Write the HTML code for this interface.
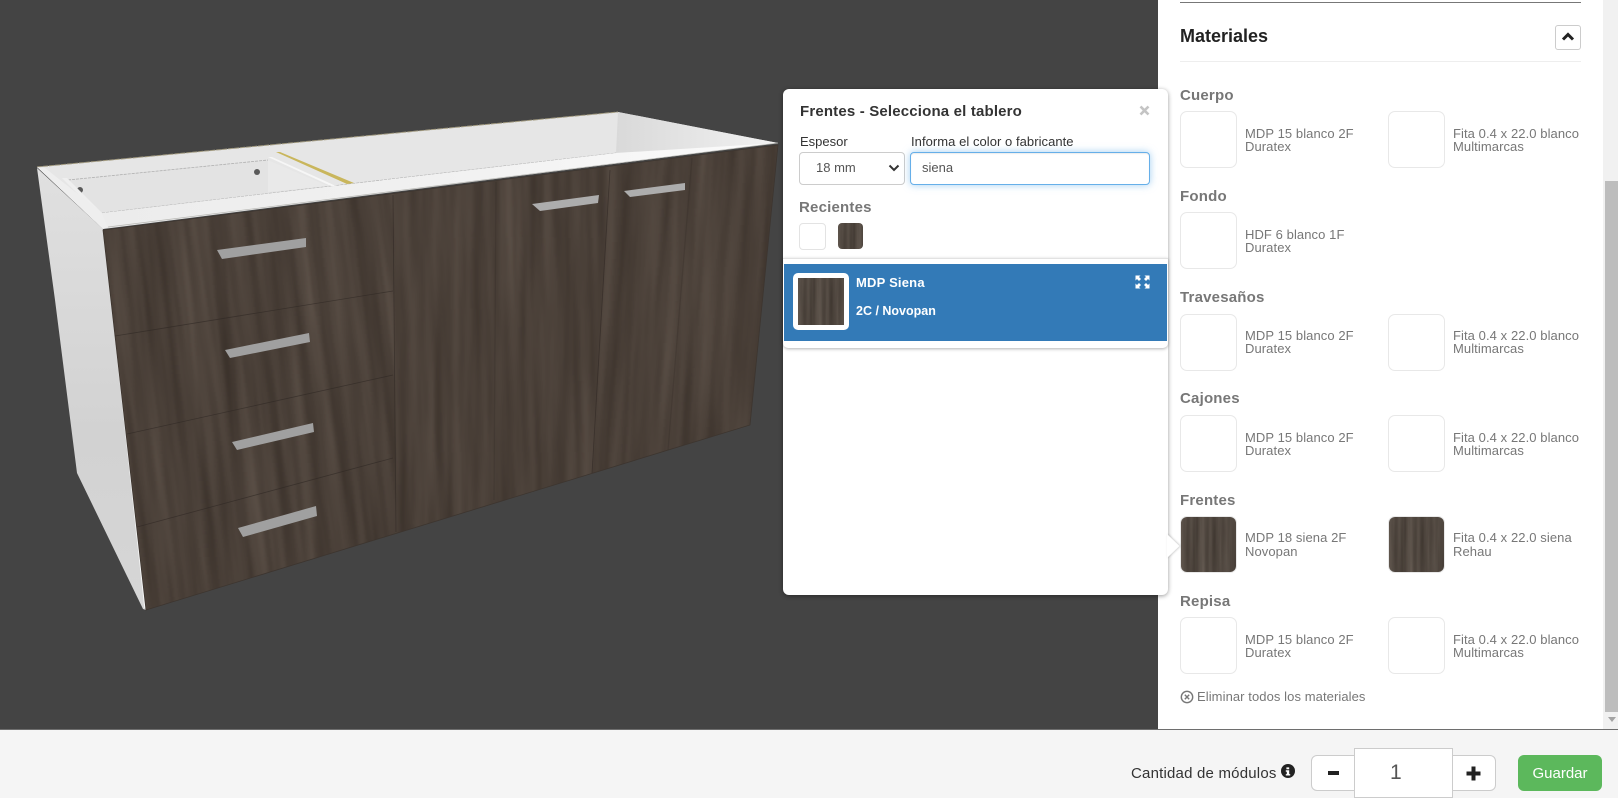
<!DOCTYPE html>
<html lang="es">
<head>
<meta charset="utf-8">
<title>Materiales</title>
<style>
html,body{margin:0;padding:0;width:1618px;height:798px;overflow:hidden;background:#444;font-family:"Liberation Sans",Arial,sans-serif}
.a{position:absolute}
.t{position:absolute;white-space:nowrap}
.h{position:absolute;white-space:nowrap;font-size:15px;font-weight:700;color:#777;line-height:18px;letter-spacing:.2px}
.th{position:absolute;width:55px;height:55px;border:1px solid #e8e8e8;border-radius:7px;background:#fff;overflow:hidden}
.d{position:absolute;white-space:nowrap;font-size:13px;line-height:13px;color:#777;letter-spacing:.08px}
svg{display:block}
</style>
</head>
<body>
<svg class="a" width="0" height="0" style="left:0;top:0">
<defs>
<filter id="wood" x="0" y="0" width="100%" height="100%" color-interpolation-filters="sRGB">
<feTurbulence type="fractalNoise" baseFrequency="0.075 0.0035" numOctaves="4" seed="7"/>
<feColorMatrix type="matrix" values="0.16 0 0 0 0.21  0.15 0 0 0 0.175  0.14 0 0 0 0.15  0 0 0 0 1"/>
<feGaussianBlur stdDeviation="1 1.2"/>
</filter>
<filter id="wood2" x="0" y="0" width="100%" height="100%" color-interpolation-filters="sRGB">
<feTurbulence type="fractalNoise" baseFrequency="0.16 0.008" numOctaves="3" seed="4"/>
<feColorMatrix type="matrix" values="0.2 0 0 0 0.22  0.19 0 0 0 0.19  0.18 0 0 0 0.165  0 0 0 0 1"/>
</filter>
<linearGradient id="side" x1="0" x2="0" y1="0" y2="1"><stop offset="0" stop-color="#e0e0e0"/><stop offset="0.6" stop-color="#d2d2d2"/><stop offset="1" stop-color="#d6d6d6"/></linearGradient>
<linearGradient id="rin" x1="0" x2="1" y1="0" y2="0"><stop offset="0" stop-color="#d9d9d9"/><stop offset="1" stop-color="#f2f2f2"/></linearGradient>
<linearGradient id="rail" x1="0" x2="1" y1="0" y2="0"><stop offset="0" stop-color="#ececec"/><stop offset="0.5" stop-color="#f1f1f1"/><stop offset="1" stop-color="#fbfbfb"/></linearGradient>
<clipPath id="front"><polygon points="103,230 778,145 750,425 146,610"/></clipPath>
</defs>
</svg>

<!-- 3D scene -->
<svg class="a" style="left:0;top:0" width="1158" height="730" viewBox="0 0 1158 730">
<rect width="1158" height="730" fill="#444"/>
<!-- top surface -->
<polygon points="37,167 618,112 778,143 103,229" fill="#e6e6e6"/>
<!-- right inner wall -->
<polygon points="618,112 778,143 616,153" fill="url(#rin)"/>
<line x1="37" y1="167" x2="618" y2="112" stroke="#a59d82" stroke-width="1" stroke-dasharray="5 1"/>
<!-- drawer box -->
<polygon points="68,180 268,160 328,186 102,213" fill="#e3e3e3"/>
<polygon points="268,160 328,186 268,192" fill="#e9e9e9"/>
<polyline points="68,180 268,160" fill="none" stroke="#b0b0b0" stroke-width="0.8" stroke-dasharray="3 1"/>
<polyline points="102,213 400,178 616,153" fill="none" stroke="#b0b0b0" stroke-width="0.8" stroke-dasharray="3 1"/>
<circle cx="80" cy="190" r="3" fill="#5a5a5a"/>
<circle cx="257" cy="172" r="3" fill="#5a5a5a"/>
<polygon points="268,157 272,157 336,186 331,186" fill="#f6f6f6"/>
<polygon points="276,152 280,152 354,183 347,184" fill="#c9b65c"/>
<polygon points="62,178 67,178 102,213 97,213" fill="#efefef"/>
<!-- front rail -->
<polygon points="102,213 616,153 778,143 108,227" fill="url(#rail)"/>
<polygon points="37,167 45,168 102,213 108,227 103,229" fill="#eeeeee"/>
<line x1="108" y1="227" x2="778" y2="143" stroke="#b8b8b4" stroke-width="0.7"/>
<!-- left side -->
<polygon points="37,168 103,229 146,610 143,609 77,473 55,300" fill="url(#side)"/>
<line x1="104" y1="232" x2="145" y2="608" stroke="#f6f6f6" stroke-width="1.4"/>
<!-- front face -->
<g clip-path="url(#front)">
<rect x="0" y="0" width="800" height="640" fill="#4e443d"/>
<g transform="translate(75,140) skewX(6.4)"><rect x="0" y="0" width="335" height="490" filter="url(#wood)"/></g>
<g transform="translate(-7,130) skewX(0.4)"><rect x="400" y="0" width="240" height="500" filter="url(#wood)"/></g>
<g transform="translate(-87,120) skewX(-3.4)"><rect x="700" y="0" width="185" height="400" filter="url(#wood)"/></g>
</g>
<polygon points="103,230 778,145 750,425 146,610" fill="none" stroke="#3d352f" stroke-width="0.8"/>
<!-- seams -->
<g stroke="#2e2723" stroke-width="0.8" fill="none" opacity=".6">
<line x1="115" y1="336" x2="393" y2="291"/>
<line x1="127" y1="434" x2="393" y2="375"/>
<line x1="137" y1="527" x2="393" y2="458"/>
<line x1="393" y1="195" x2="396" y2="532"/>
<line x1="610" y1="170" x2="592" y2="473"/>
</g>
<g stroke="#2e2723" stroke-width="1.2" fill="none" opacity=".25">
<line x1="496" y1="182" x2="494" y2="500"/>
<line x1="692" y1="158" x2="668" y2="450"/>
</g>
<!-- handles -->
<g fill="#a0a0a0">
<polygon points="217,250 306,238 306,247 222,259"/>
<polygon points="225,350 309,333 310,342 230,358"/>
<polygon points="232,442 313,423 314,432 237,450"/>
<polygon points="238,528 316,506 317,516 243,537"/>
<polygon points="532,204 599,195 598,203 540,211" fill="#adadad"/>
<polygon points="624,191 685,183 685,190 630,197" fill="#adadad"/>
</g>
</svg>

<!-- right panel -->
<div class="a" style="left:1158px;top:0;width:445px;height:729px;background:#fff"></div>
<div class="a" style="left:1603px;top:0;width:15px;height:729px;background:#f1f1f1"></div>
<div class="a" style="left:1605px;top:181px;width:13px;height:531px;background:#bdbdbd"></div>
<svg class="a" style="left:1608px;top:717px" width="9" height="6"><polygon points="0,0 8,0 4,5" fill="#a3a3a3"/></svg>

<div class="a" style="left:1180px;top:2px;width:401px;height:1px;background:#777"></div>
<div class="t" style="left:1180px;top:25px;font-size:18px;line-height:22px;font-weight:700;color:#222">Materiales</div>
<div class="a" style="left:1555px;top:25px;width:24px;height:23px;border:1px solid #ccc;border-radius:3px;background:#fff"></div>
<svg class="a" style="left:1561px;top:31px" width="14" height="11"><path d="M2 8.5 L7 3.5 L12 8.5" fill="none" stroke="#222" stroke-width="3"/></svg>
<div class="a" style="left:1180px;top:61px;width:401px;height:1px;background:#eee"></div>

<div class="h" style="left:1180px;top:87px">Cuerpo</div>
<div class="th" style="left:1180px;top:111px"></div>
<div class="d" style="left:1245px;top:127px">MDP 15 blanco 2F<br>Duratex</div>
<div class="th" style="left:1388px;top:111px"></div>
<div class="d" style="left:1453px;top:127px">Fita 0.4 x 22.0 blanco<br>Multimarcas</div>

<div class="h" style="left:1180px;top:188px">Fondo</div>
<div class="th" style="left:1180px;top:212px"></div>
<div class="d" style="left:1245px;top:228px">HDF 6 blanco 1F<br>Duratex</div>

<div class="h" style="left:1180px;top:289px">Travesaños</div>
<div class="th" style="left:1180px;top:314px"></div>
<div class="d" style="left:1245px;top:329px">MDP 15 blanco 2F<br>Duratex</div>
<div class="th" style="left:1388px;top:314px"></div>
<div class="d" style="left:1453px;top:329px">Fita 0.4 x 22.0 blanco<br>Multimarcas</div>

<div class="h" style="left:1180px;top:390px">Cajones</div>
<div class="th" style="left:1180px;top:415px"></div>
<div class="d" style="left:1245px;top:431px">MDP 15 blanco 2F<br>Duratex</div>
<div class="th" style="left:1388px;top:415px"></div>
<div class="d" style="left:1453px;top:431px">Fita 0.4 x 22.0 blanco<br>Multimarcas</div>

<div class="h" style="left:1180px;top:492px">Frentes</div>
<div class="th" style="left:1180px;top:516px"><svg width="55" height="55"><rect width="55" height="55" filter="url(#wood2)"/></svg></div>
<div class="d" style="left:1245px;top:531px;line-height:14px">MDP 18 siena 2F<br>Novopan</div>
<div class="th" style="left:1388px;top:516px"><svg width="55" height="55"><rect x="0" width="55" height="55" filter="url(#wood2)"/></svg></div>
<div class="d" style="left:1453px;top:531px;line-height:14px">Fita 0.4 x 22.0 siena<br>Rehau</div>

<div class="h" style="left:1180px;top:593px">Repisa</div>
<div class="th" style="left:1180px;top:617px"></div>
<div class="d" style="left:1245px;top:633px">MDP 15 blanco 2F<br>Duratex</div>
<div class="th" style="left:1388px;top:617px"></div>
<div class="d" style="left:1453px;top:633px">Fita 0.4 x 22.0 blanco<br>Multimarcas</div>

<svg class="a" style="left:1180px;top:690px" width="14" height="14"><circle cx="7" cy="7" r="5.7" fill="none" stroke="#777" stroke-width="1.4"/><path d="M4.8 4.8 L9.2 9.2 M9.2 4.8 L4.8 9.2" stroke="#777" stroke-width="1.4"/></svg>
<div class="d" style="left:1197px;top:690px;line-height:14px">Eliminar todos los materiales</div>

<!-- popover -->
<div class="a" style="left:783px;top:89px;width:385px;height:506px;background:#fff;border-radius:6px;box-shadow:0 1px 5px rgba(0,0,0,.4)"></div>
<svg class="a" style="left:1167px;top:532px;filter:drop-shadow(1px 0 1px rgba(0,0,0,.22))" width="16" height="28"><polygon points="0,2 12.5,14 0,26" fill="#fff"/></svg>
<div class="t" style="left:800px;top:102px;font-size:15px;line-height:20px;font-weight:700;color:#333;letter-spacing:.17px">Frentes - Selecciona el tablero</div>
<svg class="a" style="left:1139px;top:105px" width="11" height="11"><path d="M1.5 1.5 L9.5 9.5 M9.5 1.5 L1.5 9.5" stroke="#c4c4c4" stroke-width="2.6"/></svg>
<div class="t" style="left:800px;top:134px;font-size:13px;line-height:16px;color:#333">Espesor</div>
<div class="t" style="left:911px;top:134px;font-size:13px;line-height:16px;color:#333;letter-spacing:.05px">Informa el color o fabricante</div>
<div class="a" style="left:799px;top:152px;width:104px;height:31px;border:1px solid #ccc;border-radius:4px;background:#fff"></div>
<div class="t" style="left:816px;top:160px;font-size:13px;line-height:16px;color:#555">18 mm</div>
<svg class="a" style="left:888px;top:164px" width="12" height="9"><path d="M1.5 1.5 L6 6 L10.5 1.5" fill="none" stroke="#333" stroke-width="2"/></svg>
<div class="a" style="left:910px;top:152px;width:238px;height:31px;border:1px solid #66afe9;border-radius:4px;background:#fff;box-shadow:inset 0 1px 1px rgba(0,0,0,.075),0 0 8px rgba(102,175,233,.6)"></div>
<div class="t" style="left:922px;top:160px;font-size:13px;line-height:16px;color:#555">siena</div>
<div class="h" style="left:799px;top:199px">Recientes</div>
<div class="a" style="left:799px;top:223px;width:25px;height:25px;border:1px solid #e3e3e3;border-radius:4px;background:#fff"></div>
<div class="a" style="left:838px;top:223px;width:25px;height:26px;border-radius:4px;overflow:hidden"><svg width="25" height="26"><rect width="25" height="26" filter="url(#wood2)"/></svg></div>

<div class="a" style="left:783px;top:258px;width:385px;height:89px;background:#fff;border-top:1px solid #e2e2e2;border-radius:0 0 5px 5px;box-shadow:0 1px 3px rgba(0,0,0,.3)"></div>
<div class="a" style="left:784px;top:264px;width:383px;height:77px;background:#337ab7"></div>
<div class="a" style="left:793px;top:273px;width:46px;height:47px;padding:5px;background:#fff;border-radius:5px"><svg width="46" height="47"><rect width="46" height="47" filter="url(#wood2)"/></svg></div>
<div class="t" style="left:856px;top:275px;font-size:13px;line-height:16px;font-weight:700;color:#fff;letter-spacing:.2px">MDP Siena</div>
<div class="t" style="left:856px;top:303px;font-size:12.5px;line-height:16px;font-weight:700;color:#fff">2C / Novopan</div>
<svg class="a" style="left:1135px;top:275px" width="15" height="14"><path d="M0.5 0.5 H5.5 L4 2 L6 4 L4 6 L2 4 L0.5 5.5 Z M14.5 0.5 H9.5 L11 2 L9 4 L11 6 L13 4 L14.5 5.5 Z M0.5 13.5 H5.5 L4 12 L6 10 L4 8 L2 10 L0.5 8.5 Z M14.5 13.5 H9.5 L11 12 L9 10 L11 8 L13 10 L14.5 8.5 Z" fill="#fff"/></svg>

<!-- footer -->
<div class="a" style="left:0;top:729px;width:1618px;height:69px;background:#f5f5f5;border-top:1px solid #6e6e6e;box-sizing:border-box"></div>
<div class="t" style="left:1131px;top:765px;font-size:15px;line-height:18px;color:#333;letter-spacing:.2px">Cantidad de módulos</div>
<svg class="a" style="left:1281px;top:764px" width="14" height="14"><circle cx="7" cy="7" r="7" fill="#222"/><path d="M5.4 3.4h2.8v1.9h-2.8z M4.8 6.3h3.4v3.8h1v1.4h-4.4v-1.4h1v-2.4h-1z" fill="#fff"/></svg>
<div class="a" style="left:1311px;top:755px;width:185px;height:36px;box-sizing:border-box;border:1px solid #ccc;border-radius:6px;background:#fff"></div>
<div class="a" style="left:1354px;top:748px;width:99px;height:50px;box-sizing:border-box;border:1px solid #ccc;background:#fff"></div>
<div class="t" style="left:1390px;top:761px;font-size:21px;line-height:24px;color:#555">1</div>
<div class="a" style="left:1328px;top:771px;width:11px;height:4px;background:#222"></div>
<svg class="a" style="left:1466px;top:766px" width="15" height="15"><path d="M0.5 7.5 H14.5 M7.5 0.5 V14.5" stroke="#222" stroke-width="4"/></svg>
<div class="t" style="left:1518px;top:755px;width:84px;height:36px;border-radius:6px;background:#5cb85c;color:#fff;font-size:15px;line-height:37px;text-align:center">Guardar</div>
</body>
</html>
